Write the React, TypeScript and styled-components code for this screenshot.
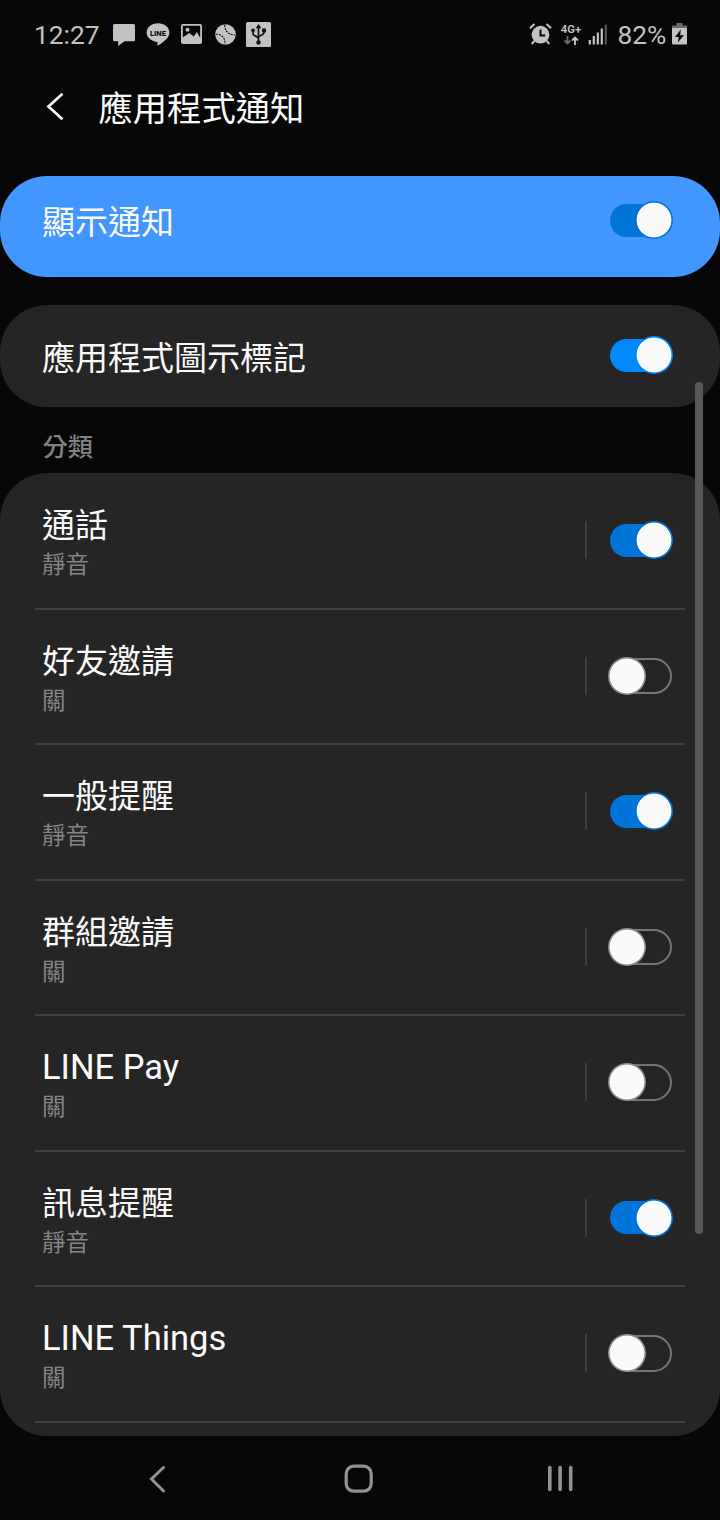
import React from "react";
import styled, { createGlobalStyle } from "styled-components";

const GlobalStyle = createGlobalStyle`
  *, *::before, *::after { box-sizing: border-box; }
  body {
    margin: 0;
    background: #070707;
    font-family: Roboto, "Noto Sans CJK TC", sans-serif;
  }
`;

const Screen = styled.div`
  position: relative;
  display: flex;
  flex-direction: column;
  width: 720px;
  height: 1520px;
  overflow: hidden;
  background: #070707;
  color: #fafafa;
`;

const StatusBar = styled.header`
  display: flex;
  justify-content: space-between;
  height: 70px;
  padding: 22px 33.5px 0 34px;
  color: #c2c2c2;
`;

const StatusGroup = styled.div`
  display: flex;
  align-items: flex-start;
`;

const StatusText = styled.span<{ $width: number }>`
  width: ${(p) => p.$width}px;
  font-size: 26.3px;
  line-height: 26px;
  white-space: nowrap;
`;

const BatteryLevel = styled(StatusText)`
  margin-left: 9.5px;
`;

const Glyph = styled.svg<{ $gap?: number; $drop?: number }>`
  display: block;
  flex: none;
  margin-left: ${(p) => p.$gap ?? 0}px;
  margin-top: ${(p) => p.$drop ?? 0}px;
`;

const Network = styled.div`
  display: flex;
  flex-direction: column;
  align-items: center;
  width: 21px;
  margin: 2px 0 0 9px;
  font-size: 11.3px;
  font-weight: 600;
  line-height: 12px;
`;

const TitleBar = styled.div`
  display: flex;
  align-items: flex-start;
  height: 106px;
  padding: 16px 0 0 46px;
`;

const Title = styled.h1`
  margin: 1px 0 0 33.5px;
  font-size: 34.3px;
  font-weight: 400;
  line-height: 44px;
`;

const Card = styled.section<{ $accent?: boolean; $height: number; $toggleTop: number }>`
  display: flex;
  flex: none;
  align-items: flex-start;
  justify-content: space-between;
  height: ${(p) => p.$height}px;
  margin-bottom: 28px;
  padding: ${(p) => p.$toggleTop}px 47px 0 42px;
  border-radius: 47px;
  background: ${(p) => (p.$accent ? "#4296ff" : "#252525")};
`;

const Label = styled.div<{ $latin?: boolean }>`
  margin-top: ${(p) => (p.$latin ? -1 : 0)}px;
  margin-bottom: ${(p) => (p.$latin ? 1 : 0)}px;
  font-size: ${(p) => (p.$latin ? 34.5 : 33)}px;
  line-height: 44px;
  white-space: nowrap;
`;

const CardLabel = styled(Label)<{ $drop?: number }>`
  margin-top: ${(p) => p.$drop ?? 0}px;
`;

const Status = styled.div`
  color: #848484;
  font-size: 23.5px;
  line-height: 34px;
`;

const SectionTitle = styled.h2`
  flex: none;
  height: 38.5px;
  margin: 0;
  padding-left: 42.5px;
  color: #828282;
  font-size: 25.3px;
  font-weight: 500;
  line-height: 26px;
`;

const List = styled.section`
  flex: none;
  height: 963px;
  padding: 1px 35px 0;
  border-radius: 47px;
  background: #252525;
`;

const Row = styled.div`
  display: flex;
  align-items: center;
  height: 135.5px;
  padding: 0 12px 1px 7px;
  border-bottom: 2px solid #404040;
`;

const RowText = styled.div`
  flex: 1;
  align-self: flex-start;
  padding-top: 30px;
`;

const Separator = styled.div`
  width: 1.5px;
  height: 38px;
  margin-right: 21.5px;
  background: #3d3d3d;
`;

const Toggle = styled.div<{ $on: boolean; $color?: string }>`
  position: relative;
  flex: none;
  width: 65px;
  height: 38px;

  &::before {
    content: "";
    position: absolute;
    top: ${(p) => (p.$on ? 2.5 : 0.75)}px;
    left: ${(p) => (p.$on ? 1.5 : 0.5)}px;
    width: ${(p) => (p.$on ? 62 : 63)}px;
    height: ${(p) => (p.$on ? 33 : 36.5)}px;
    border: ${(p) => (p.$on ? "none" : "2px solid #757575")};
    border-radius: 19px;
    background: ${(p) => (p.$on ? p.$color ?? "#0074d8" : "transparent")};
  }

  &::after {
    content: "";
    position: absolute;
    top: 0;
    left: ${(p) => (p.$on ? 27 : 0)}px;
    width: 38px;
    height: 38px;
    border-radius: 50%;
    background: radial-gradient(
      circle,
      #fafafa 17px,
      ${(p) => (p.$on ? p.$color ?? "#0074d8" : "#8d8d8d")} 17.8px
    );
  }
`;

const Scrollbar = styled.div`
  position: absolute;
  top: 382px;
  left: 695px;
  width: 8px;
  height: 852px;
  border-radius: 4px;
  background: #585858;
`;

const NavBar = styled.nav`
  display: flex;
  align-items: flex-start;
  padding: 28px 0 0 148px;
`;

const channels = [
  { name: "通話", on: true },
  { name: "好友邀請", on: false },
  { name: "一般提醒", on: true },
  { name: "群組邀請", on: false },
  { name: "LINE Pay", on: false, latin: true },
  { name: "訊息提醒", on: true },
  { name: "LINE Things", on: false, latin: true },
];

const ink = "#c2c2c2";
const bg = "#070707";

const StatusIcons = () => (
  <>
    <Glyph $gap={11} $drop={2} width="22" height="22" viewBox="0 0 22 22">
      <path fill={ink} d="M1.5 0h19A1.5 1.5 0 0 1 22 1.500v14.300a1.500 1.500 0 0 1-1.500 1.500H11.500L5.200 22v-4.700H1.500A1.500 1.500 0 0 1 0 15.800V1.500A1.500 1.500 0 0 1 1.500 0z" />
    </Glyph>
    <Glyph $gap={11} $drop={1} width="24" height="23" viewBox="0 0 24 23">
      <path fill={ink} d="M12 .3c6.400 0 11.400 4.100 11.400 9.300 0 2.300-1 4.200-2.700 6.100-2.100 2.400-6 5.300-8.700 6.800-.8.300-.7-.4-.6-1l.2-1.700c0-.5-.2-.8-.8-.9C5 18.200.6 14.400.6 9.600.6 4.400 5.600.3 12 .3z" />
      <text x="12" y="12.600" textAnchor="middle" fontFamily="Roboto, sans-serif" fontSize="8" fontWeight="800" fill={bg} textLength="16" lengthAdjust="spacingAndGlyphs">LINE</text>
    </Glyph>
    <Glyph $gap={11} $drop={2} width="21" height="20" viewBox="0 0 21 20">
      <rect x=".8" y=".8" width="19.400" height="18.400" rx="1.200" fill={ink} stroke={ink} strokeWidth="1.600" />
      <path fill={bg} d="M1.800 1.800h17.400v12L15.800 7.900l-3.100 4.700-4.400-3.500-6.500 4.300z" />
      <circle cx="6.500" cy="5.700" r="2" fill={ink} />
    </Glyph>
    <Glyph $gap={12.5} $drop={2} width="21" height="21" viewBox="0 0 21 21">
      <circle cx="10.500" cy="10.500" r="10.300" fill={ink} />
      <path d="M.8 10.200c5.700-.3 9.700 3.700 9.200 10M9.800.8c-.2 6 3.400 10 10 10.200" fill="none" stroke={bg} strokeWidth="1.100" strokeDasharray="2 1" />
    </Glyph>
    <Glyph $gap={10.5} $drop={0} width="25" height="25" viewBox="0 0 25 25">
      <rect width="25" height="25" rx="1.500" fill={ink} />
      <path d="M12.500 5v15M7 9.500v2.500c0 2.300 5.500 2 5.500 5M18 9v1.500c0 3-5.500 2.500-5.500 5" fill="none" stroke="#111" strokeWidth="1.700" />
      <path fill="#111" d="M12.500 2l2.900 4.300H9.600z" />
      <circle cx="12.500" cy="20.500" r="2.200" fill="#111" />
      <circle cx="7" cy="8.300" r="1.900" fill="#111" />
      <rect x="16.100" y="6.500" width="3.800" height="3.800" fill="#111" />
    </Glyph>
  </>
);

const SystemIcons = () => (
  <>
    <Glyph $drop={1} width="23" height="22" viewBox="0 0 23 22">
      <circle cx="11.500" cy="11.700" r="8.900" fill={ink} />
      <path d="M1 5.300L5.500 1M22 5.300L17.500 1M5.300 18l-2.600 3M17.700 18l2.600 3" stroke={ink} strokeWidth="2" />
      <path d="M11.500 6.500v6h4.700" fill="none" stroke={bg} strokeWidth="2" />
    </Glyph>
    <Network>
      4G+
      <svg width="16" height="9" viewBox="0 0 16 9">
        <path d="M4.500 0v7.500M1.500 4.500l3 3 3-3" fill="none" stroke="#686868" strokeWidth="1.900" />
        <path d="M12 9V1.500M9 4.500l3-3 3 3" fill="none" stroke={ink} strokeWidth="1.900" />
      </svg>
    </Network>
    <Glyph $gap={6.5} $drop={2} width="20" height="21" viewBox="0 0 20 21">
      <path d="M1.800 20.500v-4.500M5.800 20.500v-8.500M9.800 20.500v-12M13.800 20.500v-16" stroke={ink} strokeWidth="2.200" />
      <path d="M17.800 20.500V.7" stroke="#555" strokeWidth="2.200" />
    </Glyph>
  </>
);

export default function App() {
  return (
    <>
      <GlobalStyle />
      <Screen>
        <StatusBar>
          <StatusGroup>
            <StatusText $width={68}>12:27</StatusText>
            <StatusIcons />
          </StatusGroup>
          <StatusGroup>
            <SystemIcons />
            <BatteryLevel $width={54}>82%</BatteryLevel>
            <Glyph $drop={1} width="15" height="22" viewBox="0 0 15 22">
              <path d="M4.500 0h6v2.500H15V6H0V2.500h4.500z" fill="#6b6b6b" />
              <path d="M0 5h15v15.500a1 1 0 0 1-1 1H1a1 1 0 0 1-1-1z" fill={ink} />
              <path d="M8.800 6.500L3 14h3.800l-1 5.500L12 12.300H8.200z" fill={bg} />
            </Glyph>
          </StatusGroup>
        </StatusBar>

        <TitleBar>
          <Glyph $drop={6} width="19" height="29" viewBox="0 0 19 29">
            <path d="M16.500 1.800L2.500 14.500l14 12.700" fill="none" stroke="#fafafa" strokeWidth="2.700" />
          </Glyph>
          <Title>應用程式通知</Title>
        </TitleBar>

        <Card $accent $height={100.5} $toggleTop={25}>
          <CardLabel>顯示通知</CardLabel>
          <Toggle $on />
        </Card>
        <Card $height={102} $toggleTop={31.5}>
          <CardLabel $drop={0.5}>應用程式圖示標記</CardLabel>
          <Toggle $on $color="#0088ff" />
        </Card>
        <SectionTitle>分類</SectionTitle>
        <List>
          {channels.map((c) => (
            <Row key={c.name}>
              <RowText>
                <Label $latin={c.latin}>{c.name}</Label>
                <Status>{c.on ? "靜音" : "關"}</Status>
              </RowText>
              <Separator />
              <Toggle $on={c.on} />
            </Row>
          ))}
        </List>

        <NavBar>
          <Glyph $drop={1} width="18" height="28" viewBox="0 0 18 28">
            <path d="M15.500 2.500L3.500 14l12 12" fill="none" stroke="#929292" strokeWidth="3" strokeLinecap="round" />
          </Glyph>
          <Glyph $gap={178} width="30" height="30" viewBox="0 0 30 30">
            <rect x="2.200" y="2.200" width="25" height="25" rx="7.500" fill="none" stroke="#929292" strokeWidth="3.200" />
          </Glyph>
          <Glyph $gap={173} width="28" height="30" viewBox="0 0 28 30">
            <path d="M2.800 3.500v22M13.100 3.500v22M23.700 3.500v22" stroke="#929292" strokeWidth="3.600" strokeLinecap="round" />
          </Glyph>
        </NavBar>
        <Scrollbar />
      </Screen>
    </>
  );
}
